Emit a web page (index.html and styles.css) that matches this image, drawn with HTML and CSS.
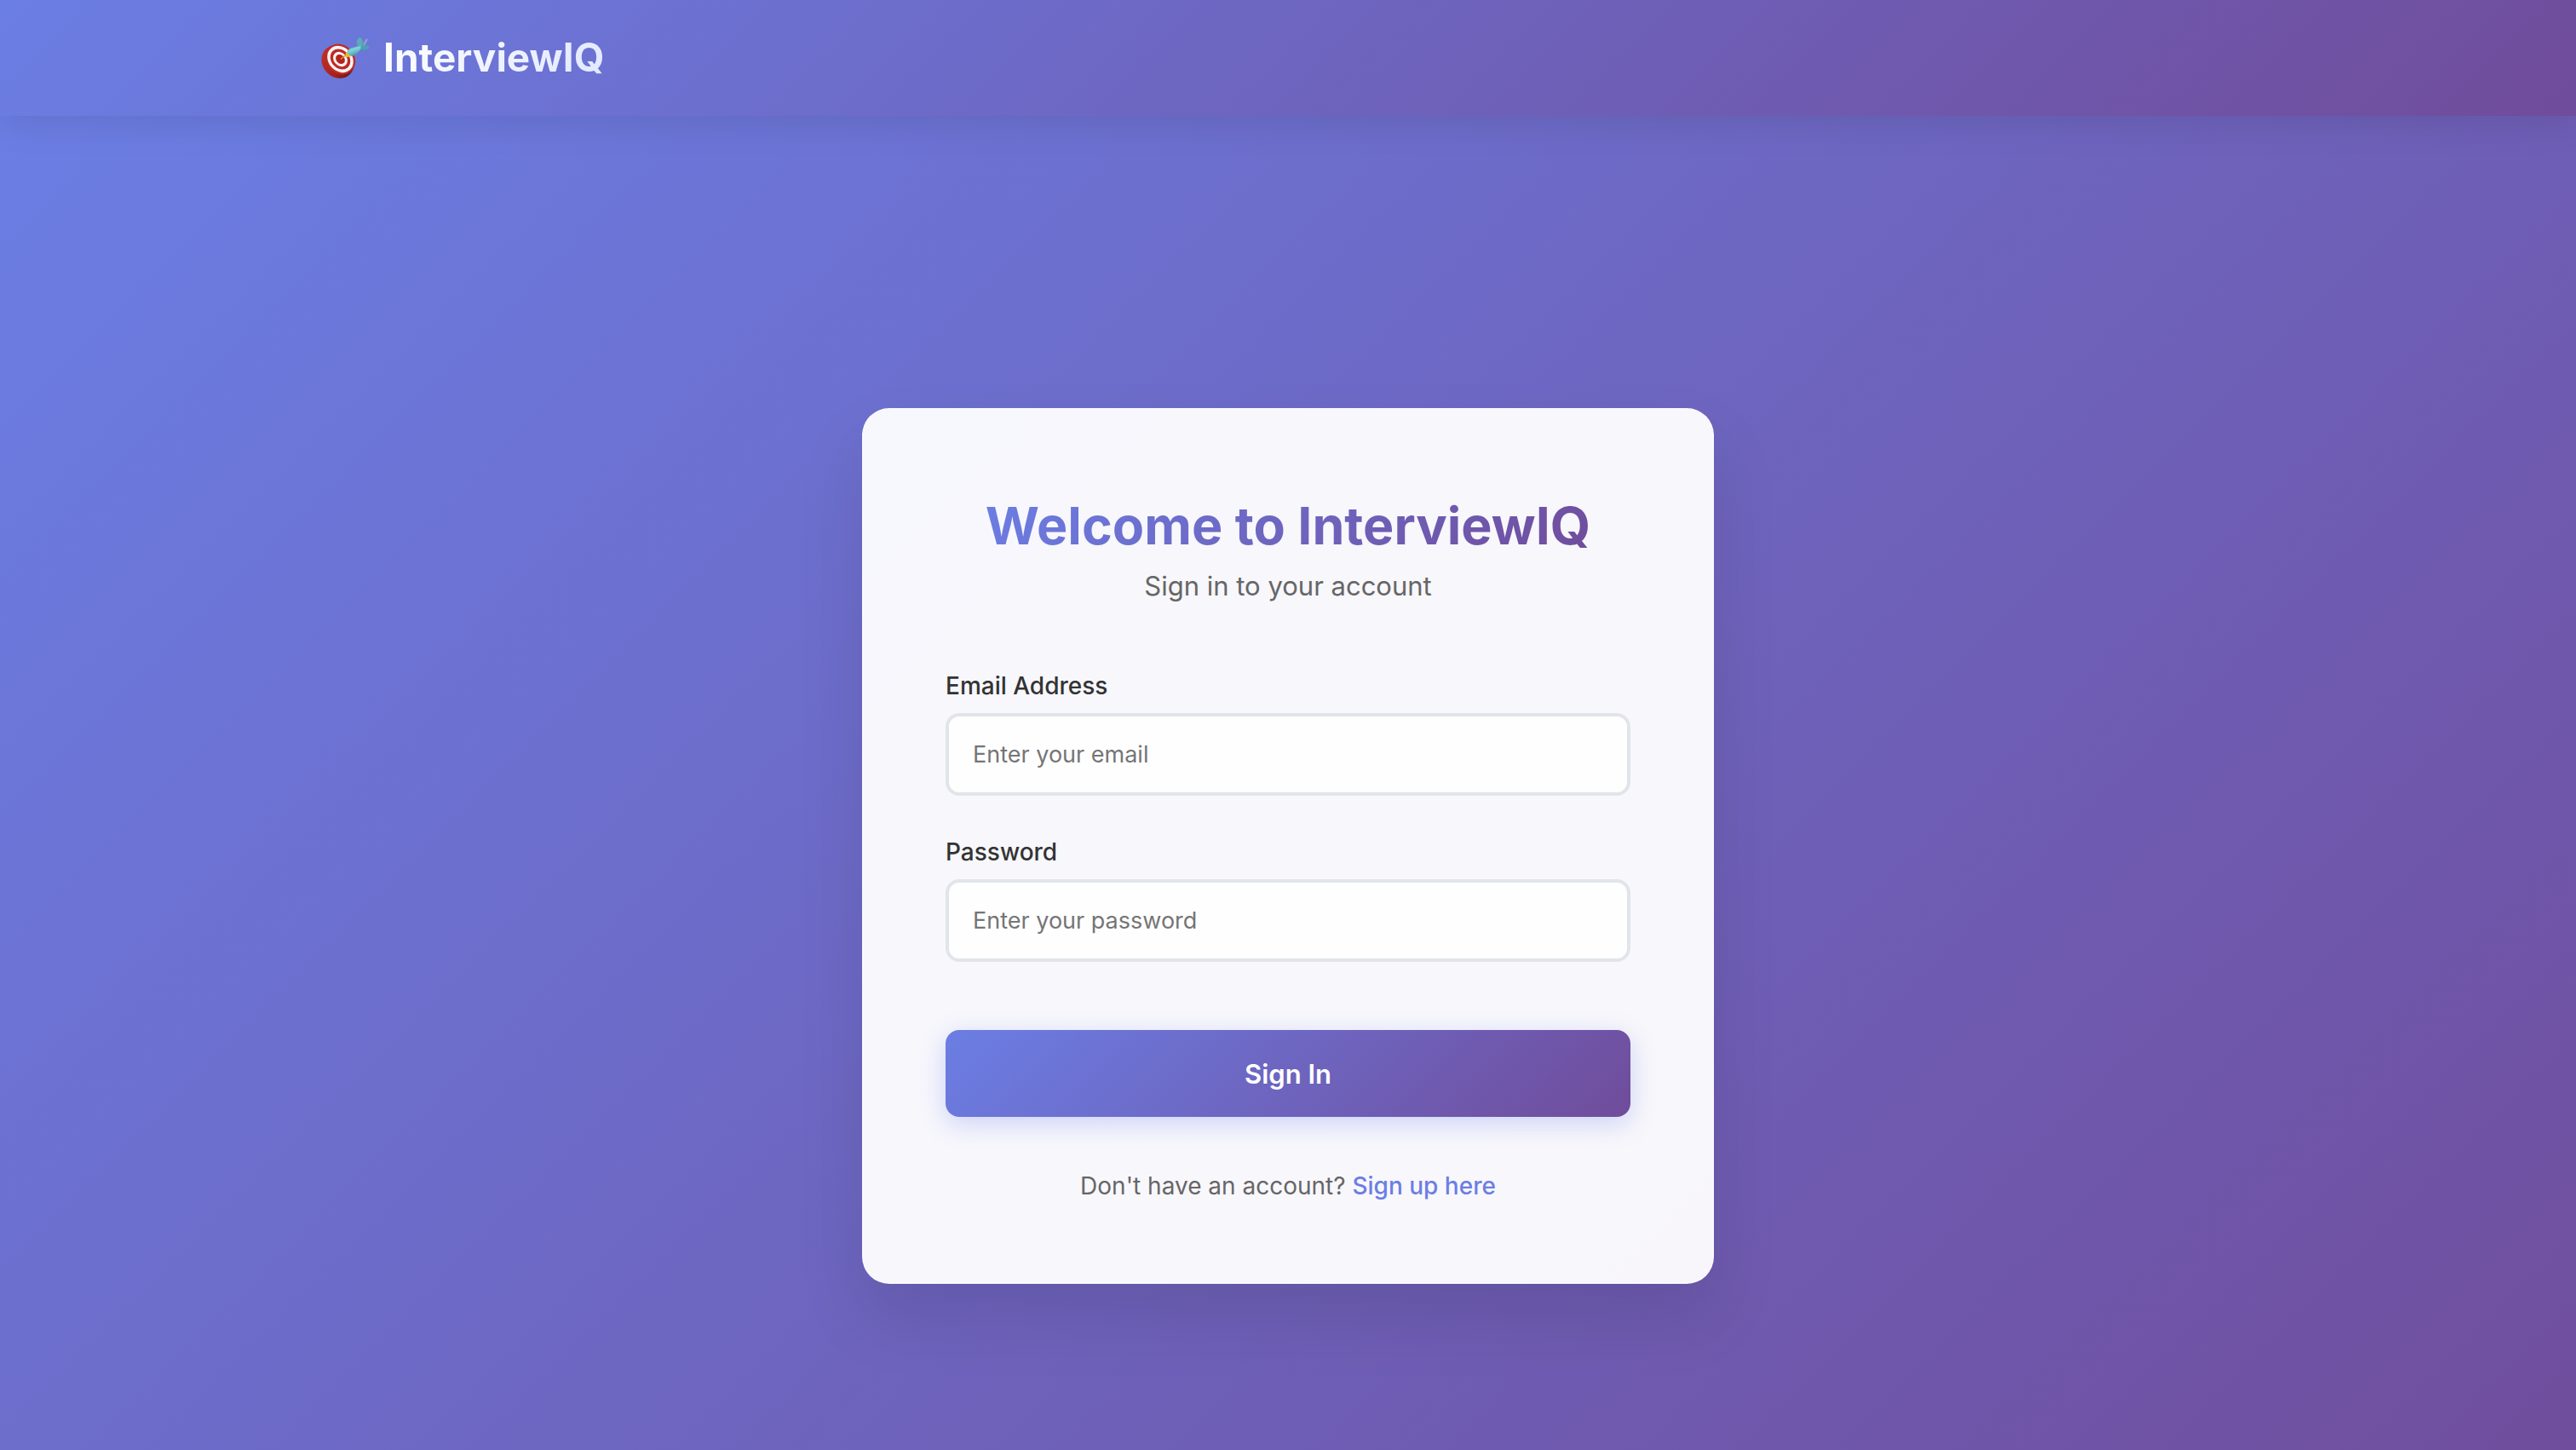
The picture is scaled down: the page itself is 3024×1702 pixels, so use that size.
FILE: index.html
```html
<!DOCTYPE html>
<html lang="en">
<head>
<meta charset="utf-8">
<meta name="viewport" content="width=device-width, initial-scale=1">
<title>InterviewIQ</title>
<link rel="stylesheet" href="styles.css">
</head>
<body>
<header class="site-header">
  <div class="header-inner">
    <a class="logo" href="#">
      <svg class="logo-icon" viewBox="0 0 60 52" aria-hidden="true">
        <defs>
          <linearGradient id="rim" x1="0" y1="0" x2="0.4" y2="1">
            <stop offset="0" stop-color="#c3332c"/>
            <stop offset="0.7" stop-color="#a3211b"/>
            <stop offset="1" stop-color="#6e1a18"/>
          </linearGradient>
          <linearGradient id="dart" x1="0" y1="0" x2="0.6" y2="1">
            <stop offset="0" stop-color="#4fb3bd"/>
            <stop offset="0.5" stop-color="#7fd3da"/>
            <stop offset="1" stop-color="#3f929e"/>
          </linearGradient>
        </defs>
        <ellipse cx="20.500" cy="31.500" rx="18" ry="20.500" transform="rotate(-42 20.500 31.500)" fill="url(#rim)"/>
        <g transform="rotate(-42 23.500 28.500)">
          <ellipse cx="23.500" cy="28.500" rx="16.500" ry="19" fill="#bf2a24"/>
          <ellipse cx="23.500" cy="28.500" rx="14" ry="16.800" fill="#f6f3f2"/>
          <ellipse cx="23.500" cy="28.500" rx="10.600" ry="13" fill="#bf2a24"/>
          <ellipse cx="23.500" cy="28.500" rx="7.600" ry="9.400" fill="#f6f3f2"/>
          <ellipse cx="23.500" cy="28.500" rx="4.800" ry="6" fill="#b3241f"/>
        </g>
        <path d="M24 28.500L31 22.500" stroke="#d9931d" stroke-width="1.600"/>
        <path d="M30 20.500L32 20L36 24L35.500 25.500L29.500 26.500Z" fill="#e8b82f"/>
        <path d="M51 12L54.500 5.500" stroke="#8f9fd0" stroke-width="2.400" stroke-linecap="round"/>
        <path d="M31 20.500Q32 16 38 15L47 12.500L49 15L44 21Q40 25.500 35.500 24.500Z" fill="url(#dart)"/>
        <path d="M44 13.500Q41 5.500 46.500 2.500Q51.500 6.500 49 13Z" fill="#58aeb8"/>
        <path d="M47.500 14Q53 10 58 14.500Q54 19.500 47.500 17Z" fill="#4aa2ae"/>
      </svg>
      <span class="logo-text">InterviewIQ</span>
    </a>
  </div>
</header>
<main class="auth">
  <section class="card">
    <h1 class="title"><span class="title-text">Welcome to InterviewIQ</span></h1>
    <p class="subtitle">Sign in to your account</p>
    <form class="form">
      <div class="field">
        <label class="label" for="email">Email Address</label>
        <input class="input" id="email" type="email" placeholder="Enter your email">
      </div>
      <div class="field">
        <label class="label" for="password">Password</label>
        <input class="input" id="password" type="password" placeholder="Enter your password">
      </div>
      <button class="submit" type="submit">Sign In</button>
    </form>
    <p class="switch">Don't have an account? <a class="link" href="#">Sign up here</a></p>
  </section>
</main>
</body>
</html>
```
FILE: styles.css
```css
:root {
  --brand: linear-gradient(135deg, #6b7ee4 0%, #704c9b 100%);
}

* {
  box-sizing: border-box;
  margin: 0;
}

body {
  min-height: 100vh;
  display: flex;
  flex-direction: column;
  font-family: Inter, "Liberation Sans", sans-serif;
  color: #333;
}

.site-header {
  position: relative;
  background: var(--brand);
  box-shadow: 0 8px 40px rgba(0, 0, 0, 0.1);
}

.header-inner {
  max-width: 2400px;
  margin: 0 auto;
  padding: 35px 64px 37px;
}

.logo {
  display: flex;
  align-items: center;
  gap: 14px;
  width: max-content;
  text-decoration: none;
}

.logo-icon {
  width: 60px;
  height: 52px;
}

.logo-text {
  font-size: 46px;
  line-height: 64px;
  font-weight: 700;
  color: transparent;
  background: linear-gradient(135deg, #fff 0%, #e0e7ff 100%);
  background-clip: text;
}

.auth {
  flex: 1;
  display: flex;
  align-items: center;
  justify-content: center;
  padding-top: 148px;
  background: var(--brand) 0 0 / 100% 109%;
}

.card {
  width: 1000px;
  max-width: 100%;
  padding: 96px;
  border: 2px solid rgba(255, 255, 255, 0.2);
  border-radius: 32px;
  background: rgba(255, 255, 255, 0.95);
  box-shadow: 0 40px 80px rgba(0, 0, 0, 0.1);
}

.title {
  margin-bottom: 12px;
  text-align: center;
  font-size: 61px;
  line-height: 80px;
  font-weight: 700;
}

.title-text {
  color: transparent;
  background: var(--brand);
  background-clip: text;
}

.subtitle {
  margin-bottom: 80px;
  text-align: center;
  font-size: 31px;
  line-height: 38px;
  color: #666;
}

.field {
  margin-bottom: 48px;
}

.label {
  display: block;
  margin-bottom: 14px;
  font-size: 28px;
  line-height: 36px;
  font-weight: 500;
}

.input {
  display: block;
  width: 100%;
  height: 97px;
  padding: 0 28px;
  border: 4px solid #e1e5e9;
  border-radius: 16px;
  background: rgba(255, 255, 255, 0.8);
  font: inherit;
  font-size: 27px;
}

.input::placeholder {
  color: #757575;
}

.submit {
  display: block;
  width: 100%;
  height: 102px;
  margin-top: 80px;
  border: 0;
  border-radius: 16px;
  background: var(--brand);
  box-shadow: 0 8px 30px rgba(102, 126, 234, 0.3);
  color: #fff;
  font: inherit;
  font-size: 31px;
  font-weight: 600;
}

.switch {
  margin-top: 64px;
  text-align: center;
  font-size: 28px;
  line-height: 34px;
  color: #666;
}

.link {
  color: #6b7ee4;
  font-weight: 500;
  text-decoration: none;
}
```
